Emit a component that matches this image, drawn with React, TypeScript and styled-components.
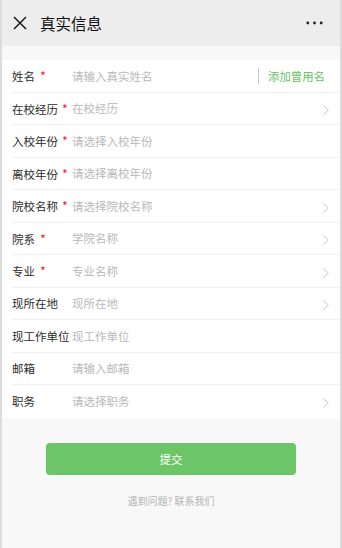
import styled, { createGlobalStyle } from 'styled-components';

const GlobalStyle = createGlobalStyle`
  html, body {
    margin: 0;
    padding: 0;
    background: #f8f8f8;
  }
  body {
    font-family: "Noto Sans CJK SC", "Noto Sans", "Liberation Sans", sans-serif;
  }
  * {
    box-sizing: border-box;
  }
`;

const Page = styled.div`
  min-height: 548px;
  background: #f8f8f8;
  border-left: 2px solid #dcdcdc;
  border-right: 2px solid #dcdcdc;
`;

const Header = styled.div`
  height: 46px;
  background: #ededed;
  display: flex;
  align-items: center;
  padding: 0 17px 0 11px;
`;

const Title = styled.div`
  margin-left: 13px;
  font-size: 15.5px;
  color: #111;
  flex: 1;
  line-height: 1;
  padding-top: 1px;
`;

const Spacer = styled.div`
  height: 14px;
`;

const Form = styled.div`
  background: #fff;
`;

const Row = styled.div`
  padding-left: 10px;
`;

const RowInner = styled.div<{ $last?: boolean }>`
  height: 32.5px;
  display: flex;
  align-items: center;
  padding-right: 11px;
  border-bottom: ${({ $last }) => ($last ? 'none' : '1px solid #f0f0f0')};
`;

const Label = styled.div`
  width: 60px;
  flex: none;
  font-size: 11.5px;
  color: #2b2b2b;
  white-space: nowrap;
`;

const Star = styled.span<{ $spaced?: boolean }>`
  color: #f21d1d;
  font-size: 12.5px;
  margin-left: ${({ $spaced }) => ($spaced ? '5px' : '4px')};
`;

const Placeholder = styled.div`
  flex: 1;
  font-size: 11.5px;
  color: #b9b9b9;
  white-space: nowrap;
`;

const Divider = styled.div`
  width: 1px;
  height: 16px;
  background: #c9c9c9;
  margin-right: 9px;
`;

const Link = styled.div`
  font-size: 11.4px;
  color: #68c164;
  margin-right: 4px;
`;

const Chevron = styled.svg`
  width: 6px;
  height: 10px;
  margin-top: 4px;
`;

const Footer = styled.div`
  display: flex;
  flex-direction: column;
  align-items: center;
  padding-top: 25px;
`;

const Submit = styled.button`
  width: 250px;
  height: 32px;
  border: none;
  border-radius: 4px;
  background: #6cc566;
  color: #fff;
  font-family: inherit;
  font-size: 11.5px;
  cursor: pointer;
`;

const Help = styled.div`
  margin-top: 18px;
  font-size: 10px;
  color: #b5b5b5;
`;

type Field = {
  label: string;
  required?: boolean;
  spaced?: boolean;
  placeholder: string;
  arrow?: boolean;
  extra?: boolean;
};

const fields: Field[] = [
  { label: '姓名', required: true, spaced: true, placeholder: '请输入真实姓名', extra: true },
  { label: '在校经历', required: true, placeholder: '在校经历', arrow: true },
  { label: '入校年份', required: true, placeholder: '请选择入校年份' },
  { label: '离校年份', required: true, placeholder: '请选择离校年份' },
  { label: '院校名称', required: true, placeholder: '请选择院校名称', arrow: true },
  { label: '院系', required: true, spaced: true, placeholder: '学院名称', arrow: true },
  { label: '专业', required: true, spaced: true, placeholder: '专业名称', arrow: true },
  { label: '现所在地', placeholder: '现所在地', arrow: true },
  { label: '现工作单位', placeholder: '现工作单位' },
  { label: '邮箱', placeholder: '请输入邮箱' },
  { label: '职务', placeholder: '请选择职务', arrow: true },
];

const App = () => {
  return (
    <Page>
      <GlobalStyle />
      <Header>
        <svg width="14" height="14" viewBox="0 0 14 14">
          <path d="M1 1 L13 13 M13 1 L1 13" stroke="#1a1a1a" strokeWidth="1.5" />
        </svg>
        <Title>真实信息</Title>
        <svg width="17" height="4" viewBox="0 0 17 4">
          <circle cx="1.8" cy="2" r="1.4" fill="#222" />
          <circle cx="8.5" cy="2" r="1.4" fill="#222" />
          <circle cx="15.2" cy="2" r="1.4" fill="#222" />
        </svg>
      </Header>
      <Spacer />
      <Form>
        {fields.map((f, i) => (
          <Row key={f.label}>
            <RowInner $last={i === fields.length - 1}>
              <Label>
                {f.label}
                {f.required && <Star $spaced={f.spaced}>*</Star>}
              </Label>
              <Placeholder>{f.placeholder}</Placeholder>
              {f.extra && (
                <>
                  <Divider />
                  <Link>添加曾用名</Link>
                </>
              )}
              {f.arrow && (
                <Chevron viewBox="0 0 6 10">
                  <polyline points="0.5,0.5 5.3,5 0.5,9.5" fill="none" stroke="#c6c6c6" strokeWidth="1" />
                </Chevron>
              )}
            </RowInner>
          </Row>
        ))}
      </Form>
      <Footer>
        <Submit>提交</Submit>
        <Help>遇到问题? 联系我们</Help>
      </Footer>
    </Page>
  );
};

export default App;
